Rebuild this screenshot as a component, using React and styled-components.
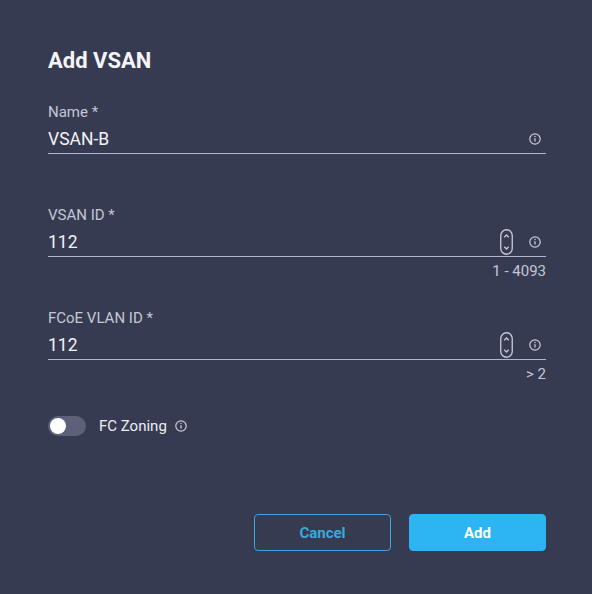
import React from 'react';
import styled, { createGlobalStyle } from 'styled-components';

const GlobalStyle = createGlobalStyle`
  html, body {
    margin: 0;
    padding: 0;
    background: #373b51;
  }
  body {
    font-family: Roboto, "Noto Sans", sans-serif;
  }
`;

function InfoIcon({ size = 12 }) {
  return (
    <svg width={size} height={size} viewBox="0 0 12 12" fill="none">
      <circle cx="6" cy="6" r="5.2" stroke="#c9ccd9" strokeWidth="1.2" />
      <line x1="6" y1="5.3" x2="6" y2="8.6" stroke="#c9ccd9" strokeWidth="1.3" />
      <circle cx="6" cy="3.6" r="0.75" fill="#c9ccd9" />
    </svg>
  );
}

function Spinner() {
  return (
    <svg width="13" height="26" viewBox="0 0 13 26" fill="none">
      <rect x="0.75" y="0.75" width="11.5" height="24.5" rx="5.75" stroke="#c9ccd9" strokeWidth="1.3" />
      <path d="M4.3 8.2 L6.5 6 L8.7 8.2" stroke="#c9ccd9" strokeWidth="1.3" />
      <path d="M4.3 17.8 L6.5 20 L8.7 17.8" stroke="#c9ccd9" strokeWidth="1.3" />
    </svg>
  );
}

function Field({ label, value, hint, numeric }) {
  return (
    <FieldWrap>
      <Label>{label}</Label>
      <InputRow>
        <Value>{value}</Value>
        {numeric && (
          <SpinBox>
            <Spinner />
          </SpinBox>
        )}
        <IconBox>
          <InfoIcon />
        </IconBox>
      </InputRow>
      <Hint>{hint || '\u00a0'}</Hint>
    </FieldWrap>
  );
}

export default function App() {
  return (
    <>
      <GlobalStyle />
      <Dialog>
        <Title>Add VSAN</Title>
        <Fields>
          <Field label="Name *" value="VSAN-B" />
          <Field label="VSAN ID *" value="112" hint="1 - 4093" numeric />
          <Field label="FCoE VLAN ID *" value="112" hint="> 2" numeric />
        </Fields>
        <ToggleRow>
          <Switch>
            <Knob />
          </Switch>
          <ToggleLabel>FC Zoning</ToggleLabel>
          <InfoIcon />
        </ToggleRow>
        <Actions>
          <Button>Cancel</Button>
          <Button primary>Add</Button>
        </Actions>
      </Dialog>
    </>
  );
}

const Dialog = styled.div`
  box-sizing: border-box;
  width: 592px;
  height: 594px;
  padding: 49px 46px 0 48px;
  display: flex;
  flex-direction: column;
`;

const Title = styled.h1`
  margin: 0;
  font-size: 22px;
  line-height: 24px;
  font-weight: 700;
  color: #f4f5f8;
`;

const Fields = styled.div`
  margin-top: 30px;
  display: flex;
  flex-direction: column;
  gap: 29px;
`;

const FieldWrap = styled.div`
  display: flex;
  flex-direction: column;
`;

const Label = styled.div`
  font-size: 15px;
  line-height: 18px;
  color: #c4c7d5;
`;

const InputRow = styled.div`
  margin-top: 6px;
  display: flex;
  align-items: center;
  height: 24px;
  padding-bottom: 2px;
  border-bottom: 1.5px solid #b1b5c9;
`;

const Value = styled.div`
  flex: 1;
  font-size: 17.5px;
  line-height: 22px;
  color: #f2f3f7;
`;

const SpinBox = styled.div`
  display: flex;
  margin-right: 16px;
  margin-top: -1px;
`;

const IconBox = styled.div`
  display: flex;
  margin-right: 5px;
`;

const Hint = styled.div`
  margin-top: 5px;
  font-size: 15px;
  line-height: 18px;
  text-align: right;
  color: #c4c7d5;
`;

const ToggleRow = styled.div`
  margin-top: 33px;
  display: flex;
  align-items: center;
  height: 20px;
`;

const Switch = styled.div`
  position: relative;
  width: 38px;
  height: 20px;
  border-radius: 10px;
  background: #5c6079;
  margin-right: 13px;
`;

const Knob = styled.div`
  position: absolute;
  left: 2px;
  top: 2px;
  width: 16px;
  height: 16px;
  border-radius: 50%;
  background: #ffffff;
`;

const ToggleLabel = styled.span`
  font-size: 15px;
  color: #eceef3;
  margin-right: 8px;
`;

const Actions = styled.div`
  margin-top: 78px;
  display: flex;
  justify-content: flex-end;
  gap: 18px;
`;

const Button = styled.button`
  box-sizing: border-box;
  width: 137px;
  height: 37px;
  border-radius: 4px;
  font-family: Roboto, "Noto Sans", sans-serif;
  font-size: 15px;
  font-weight: 700;
  cursor: pointer;
  border: 1.5px solid ${(p) => (p.primary ? '#2cb5f2' : '#3aa6d9')};
  background: ${(p) => (p.primary ? '#2cb5f2' : 'transparent')};
  color: ${(p) => (p.primary ? '#ffffff' : '#3aa9de')};
`;
